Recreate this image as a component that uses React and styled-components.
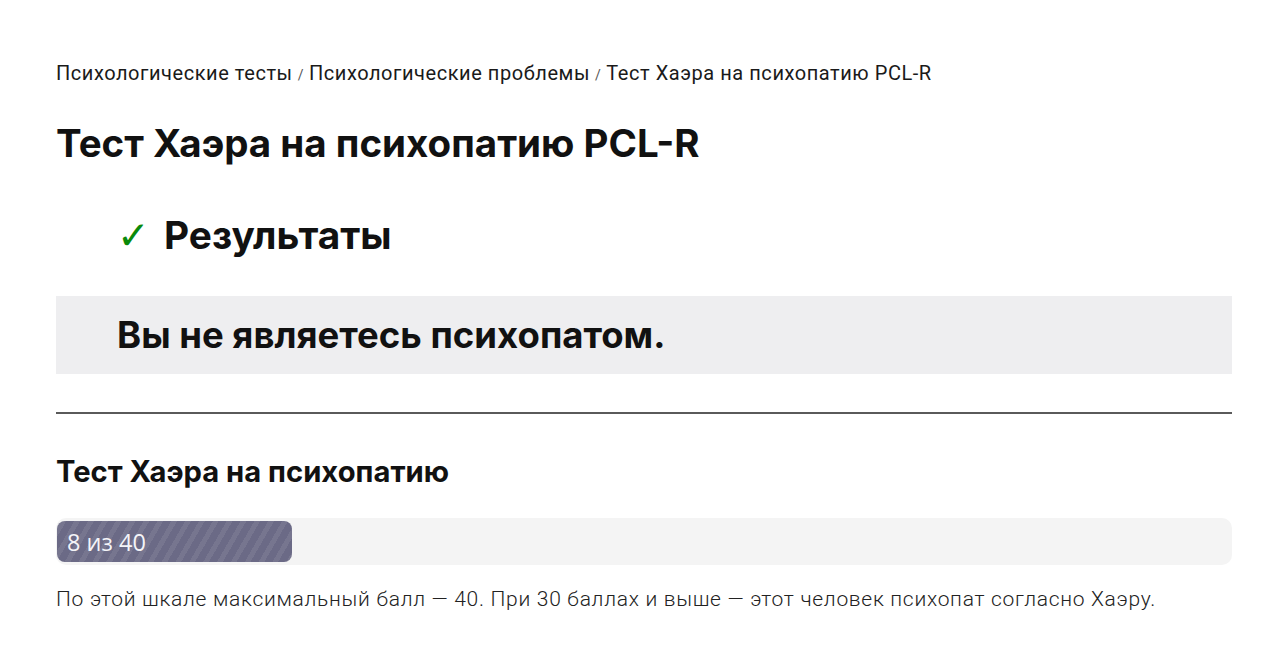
import React from 'react'
import styled, { createGlobalStyle } from 'styled-components'

const Global = createGlobalStyle`
body {
  margin: 0;
  background: #fff;
  font-family: "Inter", "Roboto", sans-serif;
  color: #111;
}
`;

const Page = styled.div`
  padding: 58px 51px 40px 56px;
`;

const Crumbs = styled.nav`
  font-family: "Roboto", sans-serif;
  font-size: 20px;
  font-weight: 400;
  letter-spacing: 0.55px;
  color: #1a1a1a;
  line-height: 30px;
`;

const Sep = styled.span`
  font-size: 14px;
  color: #555;
  margin: 0 5px;
`;

const Title = styled.h1`
  font-size: 38.5px;
  font-weight: 700;
  margin: 29px 0 0;
  line-height: 48px;
`;

const Results = styled.h2`
  display: flex;
  align-items: center;
  font-size: 38.8px;
  font-weight: 700;
  margin: 44px 0 0 62px;
  line-height: 48px;
`;

const Check = styled.span`
  color: #0a8a0a;
  font-family: "DejaVu Sans", sans-serif;
  font-size: 39px;
  font-weight: 700;
  line-height: 1;
  width: 47px;
  margin-left: -1px;
  display: inline-flex;
  align-items: center;
`;

const Verdict = styled.div`
  background: #eeeef0;
  margin-top: 37px;
  height: 78px;
  display: flex;
  align-items: center;
  padding-left: 61px;
  font-size: 36.5px;
  font-weight: 700;
`;

const Rule = styled.hr`
  border: none;
  border-top: 2px solid #5a5a5a;
  margin: 38px 0 0;
`;

const Scale = styled.h3`
  font-size: 29.2px;
  font-weight: 700;
  margin: 40px 0 0;
  line-height: 36px;
`;

const Track = styled.div`
  margin-top: 28px;
  height: 47px;
  background: #f4f4f4;
  border-radius: 10px;
  display: flex;
  align-items: center;
  padding: 0 1px;
`;

const Fill = styled.div`
  height: 41px;
  border-radius: 8px;
  background-color: #6b6a86;
  background-image: repeating-linear-gradient(
    -60deg,
    rgba(255, 255, 255, 0.08) 0 5px,
    rgba(0, 0, 0, 0) 5px 12px
  );
  display: flex;
  align-items: center;
  padding-left: 10px;
  box-sizing: border-box;
  color: #f4f4f8;
  font-family: "Open Sans", sans-serif;
  font-size: 23.5px;
`;

const Note = styled.p`
  font-family: "Roboto", sans-serif;
  font-weight: 300;
  font-size: 21px;
  letter-spacing: 0.71px;
  color: #222;
  margin: 22px 0 0;
`;

export default function App() {
  const score = 8
  const max = 40
  return (
    <>
      <Global />
      <Page>
        <Crumbs>
          Психологические тесты<Sep>/</Sep>Психологические проблемы<Sep>/</Sep>Тест Хаэра на психопатию PCL-R
        </Crumbs>
        <Title>Тест Хаэра на психопатию PCL-R</Title>
        <Results><Check>✓</Check>Результаты</Results>
        <Verdict>Вы не являетесь психопатом.</Verdict>
        <Rule />
        <Scale>Тест Хаэра на психопатию</Scale>
        <Track>
          <Fill style={{ width: `${(score / max) * 100}%` }}>{score} из {max}</Fill>
        </Track>
        <Note>По этой шкале максимальный балл — 40. При 30 баллах и выше — этот человек психопат согласно Хаэру.</Note>
      </Page>
    </>
  )
}
